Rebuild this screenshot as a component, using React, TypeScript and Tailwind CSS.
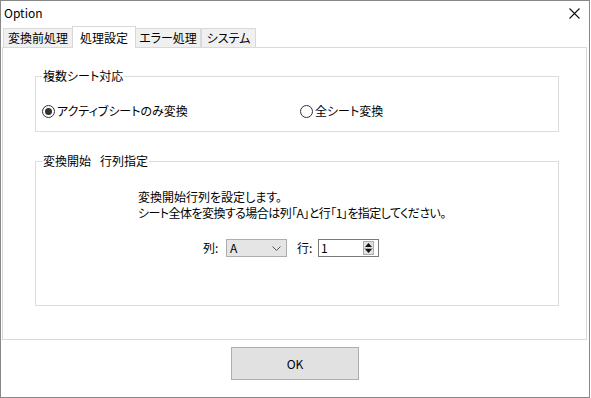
import React from "react";

const jp = "[font-family:'Noto_Sans_CJK_JP','Noto_Sans',sans-serif] [font-feature-settings:'palt']";

function Radio({ checked, label }: { checked?: boolean; label: string }) {
  return (
    <div className="flex items-center gap-[2px]">
      <div className="w-[13px] h-[13px] rounded-full border border-[#333] bg-white flex items-center justify-center">
        {checked && <div className="w-[7px] h-[7px] rounded-full bg-[#333]" />}
      </div>
      <span className="text-[12px] leading-[16px] text-black">{label}</span>
    </div>
  );
}

function Group({ title, className, children }: { title: React.ReactNode; className: string; children: React.ReactNode }) {
  return (
    <div className={`relative border border-[#dcdcdc] ${className}`}>
      <span className="absolute left-[6px] top-[-9px] bg-white px-[1px] text-[12px] leading-[16px] text-black">
        {title}
      </span>
      {children}
    </div>
  );
}

export default function App() {
  const tabs = [
    { label: "変換前処理", w: "w-[70px]" },
    { label: "処理設定", w: "w-[64px]", active: true },
    { label: "エラー処理", w: "w-[66px]" },
    { label: "システム", w: "w-[55px]" },
  ];
  return (
    <div className={`w-[590px] h-[398px] border border-[#888] bg-white flex flex-col ${jp}`}>
      {/* Title bar */}
      <div className="h-[24px] flex items-center justify-between pl-[3px] pr-[8px]">
        <span className="text-[12px] leading-[16px] text-black">Option</span>
        <svg width="11" height="11" viewBox="0 0 11 11" className="mr-[1px] mt-[1px]">
          <path d="M0.5 0.5 L10.5 10.5 M10.5 0.5 L0.5 10.5" stroke="#111" strokeWidth="1.1" />
        </svg>
      </div>
      {/* Tabs */}
      <div className="flex items-end h-[22px] pl-[2px] relative z-10">
        {tabs.map((t) =>
          t.active ? (
            <div
              key={t.label}
              className={`${t.w} h-[22px] -mx-[1px] mb-[-1px] bg-white border border-b-0 border-[#d9d9d9] flex items-center justify-center text-[12px] leading-[16px] text-black`}
            >
              {t.label}
            </div>
          ) : (
            <div
              key={t.label}
              className={`${t.w} h-[19px] bg-[#f0f0f0] border border-b-0 border-[#d9d9d9] flex items-center justify-center text-[12px] leading-[16px] text-black`}
            >
              {t.label}
            </div>
          )
        )}
      </div>
      {/* Panel */}
      <div className="ml-[1px] mr-[2px] h-[293px] border border-[#d9d9d9] bg-white flex flex-col pl-[32px] pr-[27px] pt-[28px]">
        <Group title="複数シート対応" className="h-[56px] flex items-start pt-[26px] pl-[6px]">
          <div className="w-[258px]">
            <Radio checked label="アクティブシートのみ変換" />
          </div>
          <Radio label="全シート変換" />
        </Group>
        <Group
          title={
            <span className="flex gap-[9px]">
              <span>変換開始</span>
              <span>行列指定</span>
            </span>
          }
          className="mt-[29px] h-[145px] flex flex-col pt-[27px]"
        >
          <div className="pl-[102px] text-[12px] leading-[16px] text-black">
            <div>変換開始行列を設定します。</div>
            <div className="tracking-[-0.55px]">シート全体を変換する場合は列「A」と行「1」を指定してください。</div>
          </div>
          <div className="mt-[18px] pl-[167px] flex items-center">
            <span className="text-[12px] leading-[16px] text-black w-[23px]">列:</span>
            <div className="w-[61px] h-[18px] bg-[#e5e5e5] border border-[#adadad] flex items-center justify-between pl-[3px] pr-[5px]">
              <span className="text-[12px] leading-[16px] text-black">A</span>
              <svg width="9" height="5" viewBox="0 0 9 5">
                <path d="M0.5 0.5 L4.5 4.5 L8.5 0.5" stroke="#555" strokeWidth="1" fill="none" />
              </svg>
            </div>
            <span className="ml-[10px] text-[12px] leading-[16px] text-black w-[21px]">行:</span>
            <div className="w-[61px] h-[18px] bg-white border border-[#7a7a7a] flex items-center justify-between pl-[2px] pr-[4px]">
              <span className="text-[12px] leading-[16px] text-black">1</span>
              <div className="w-[11px] h-[14px] flex flex-col border border-[#adadad]">
                <div className="flex-1 bg-[#e1e1e1] border-b border-[#adadad] flex items-center justify-center">
                  <svg width="7" height="4" viewBox="0 0 7 4"><path d="M0 4 L3.5 0 L7 4 Z" fill="#111" /></svg>
                </div>
                <div className="flex-1 bg-[#e1e1e1] flex items-center justify-center">
                  <svg width="7" height="4" viewBox="0 0 7 4"><path d="M0 0 L3.5 4 L7 0 Z" fill="#111" /></svg>
                </div>
              </div>
            </div>
          </div>
        </Group>
      </div>
      {/* Footer */}
      <div className="flex-1 flex justify-start pl-[230px] pt-[7px]">
        <button className="w-[128px] h-[33px] bg-[#e1e1e1] border border-[#adadad] text-[12px] text-black">OK</button>
      </div>
    </div>
  );
}
